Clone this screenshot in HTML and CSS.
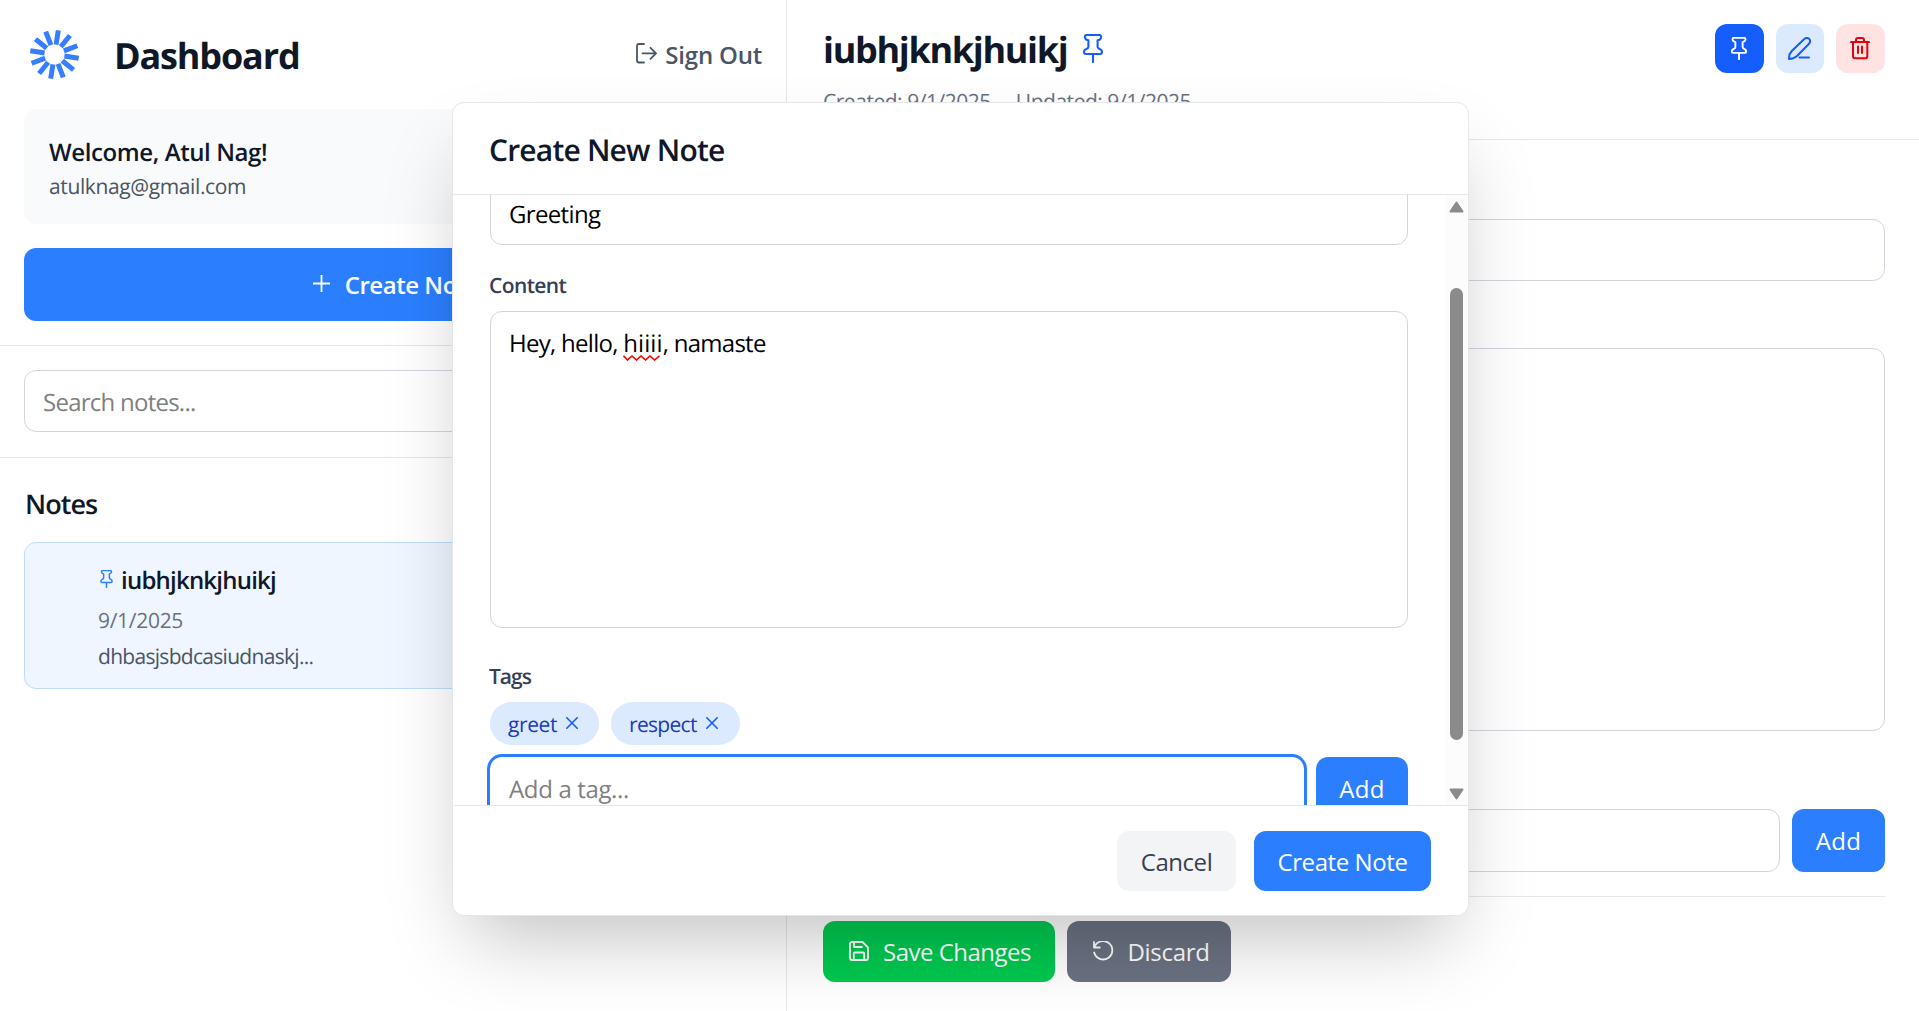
FILE: index.html
```html
<!DOCTYPE html>
<html lang="en">
<head>
<meta charset="utf-8">
<title>Dashboard</title>
<link rel="stylesheet" href="styles.css">
</head>
<body>
<svg class="defs" aria-hidden="true">
  <symbol id="pin" viewBox="0 0 20 29"><path d="M4 1H16Q18.5 1 18 3.5Q17.4 6 14.6 6.4V13Q14.6 14.2 17 15.2Q19 16.3 19 18Q19 20 17.2 20H2.8Q1 20 1 18Q1 16.3 3 15.2Q5.4 14.2 5.4 13V6.4Q2.6 6 2 3.5Q1.5 1 4 1ZM10 20V28"/></symbol>
  <symbol id="cross" viewBox="0 0 12 12"><path d="M.8.8L11.2 11.2M11.2.8L.8 11.2"/></symbol>
</svg>

<div class="app">
  <aside class="sidebar">
    <header class="side-head">
      <div class="brand-row">
        <svg class="logo" viewBox="-30.5 -30.5 61 61">
          <g id="r"><path d="M0-10V-24.5M0 10V24.5"/></g>
          <use href="#r" transform="rotate(30)"/><use href="#r" transform="rotate(60)"/><use href="#r" transform="rotate(90)"/><use href="#r" transform="rotate(120)"/><use href="#r" transform="rotate(150)"/>
        </svg>
        <h1 class="brand">Dashboard</h1>
        <button class="signout">
          <svg class="ico" width="21" height="21" viewBox="0 0 21 21"><path d="M8 1H3Q1 1 1 3V17.5Q1 19.5 3 19.5H8M6.5 10.3H20M14.5 4.8L20 10.3L14.5 15.8"/></svg>
          <span>Sign Out</span>
        </button>
      </div>
      <div class="welcome">
        <p class="hello">Welcome, Atul Nag!</p>
        <p class="email">atulknag@gmail.com</p>
      </div>
      <button class="btn create">
        <svg class="ico" width="17" height="17" viewBox="0 0 17 17"><path d="M8.5 .5V16.5M.5 8.5H16.5"/></svg>
        <span>Create Note</span>
      </button>
    </header>
    <div class="search"><div class="field ph">Search notes...</div></div>
    <section class="notes">
      <h2>Notes</h2>
      <article class="card">
        <h3><svg class="ico pin-s" width="13" height="18"><use href="#pin"/></svg><span>iubhjknkjhuikj</span></h3>
        <p class="date">9/1/2025</p>
        <p class="snippet">dhbasjsbdcasiudnaskj...</p>
      </article>
    </section>
  </aside>

  <main class="detail">
    <header class="detail-head">
      <div>
        <div class="title-row"><h2 class="note-title">iubhjknkjhuikj</h2><svg class="ico pin-l" width="20" height="29"><use href="#pin"/></svg></div>
        <div class="meta"><span>Created: 9/1/2025</span><span>Updated: 9/1/2025</span></div>
      </div>
      <div class="tools">
        <button class="tool tool-pin"><svg class="ico" width="16" height="23"><use href="#pin"/></svg></button>
        <button class="tool tool-edit"><svg class="ico" width="23" height="23" viewBox="0 0 23 23"><path d="M1 22Q.8 17 3.8 14L16 2.2Q18.8-.2 21.2 1.8Q23.2 4.4 20.8 7L9 19Q6 21.8 1 22ZM11.5 20.5H21"/></svg></button>
        <button class="tool tool-del"><svg class="ico" width="20" height="23" viewBox="0 0 20 23"><path d="M1 5H19M6 5V3Q6 1 8 1H12Q14 1 14 3V5M3 5V19.3Q3 21.3 5 21.3H15.3Q17.3 21.3 17.3 19.3V5M8 9.6V16M12 9.6V16"/></svg></button>
      </div>
    </header>
    <div class="editor">
      <div class="field"></div>
      <div class="field area"></div>
      <div class="tag-row"><div class="field grow"></div><button class="btn add">Add</button></div>
      <div class="actions">
        <button class="btn save">
          <svg class="ico" width="20" height="20" viewBox="0 0 20 20"><path d="M3 1H13.5L19 6.5V17Q19 19 17 19H3Q1 19 1 17V3Q1 1 3 1ZM5 1V6H13M4.8 19V12.5Q4.8 11.5 5.8 11.5H14.2Q15.2 11.5 15.2 12.5V19"/></svg>
          <span>Save Changes</span>
        </button>
        <button class="btn discard">
          <svg class="ico" width="21" height="21" viewBox="0 0 21 21"><path d="M1 1V6.5H6.8M1.4 6.3A9.2 9.2 0 1 1 1.2 11.5"/></svg>
          <span>Discard</span>
        </button>
      </div>
    </div>
  </main>
</div>

<div class="modal">
  <header class="modal-head"><h2>Create New Note</h2></header>
  <div class="modal-body">
    <div class="form">
      <div class="field">Greeting</div>
      <label class="lbl lbl-content">Content</label>
      <div class="field note-area"><span class="txt">Hey, hello, <span class="typo">hiiii<svg class="squiggle" width="38" height="6" viewBox="0 0 38 6"><path d="M.5.8L4.5 5L9 1L13.5 5L18 1L22.5 5L27 1L31.5 5L36.5.8"/></svg></span>, namaste</span></div>
      <label class="lbl lbl-tags">Tags</label>
      <div class="chips">
        <span class="chip">greet<svg class="ico" width="12" height="12"><use href="#cross"/></svg></span>
        <span class="chip chip-b">respect<svg class="ico" width="12" height="12"><use href="#cross"/></svg></span>
      </div>
      <div class="tag-row"><div class="field grow focus ph">Add a tag...</div><button class="btn add">Add</button></div>
    </div>
    <div class="bar">
      <svg width="15" height="12" viewBox="0 0 15 12"><path d="M7.5 1.5L13.5 10.5H1.5Z"/></svg>
      <div class="thumb"></div>
      <svg width="15" height="12" viewBox="0 0 15 12"><path d="M7.5 10.5L13.5 1.5H1.5Z"/></svg>
    </div>
  </div>
  <footer class="modal-foot">
    <button class="btn cancel">Cancel</button>
    <button class="btn submit">Create Note</button>
  </footer>
</div>
</body>
</html>
```
FILE: styles.css
```css
* { box-sizing: border-box; margin: 0; padding: 0; }
body {
  width: 1919px;
  height: 1011px;
  overflow: hidden;
  background: #fff;
  color: #101828;
  font: 24px/36px "Open Sans", "Noto Sans", sans-serif;
  letter-spacing: -0.45px;
  text-rendering: geometricPrecision;
}
button { border: 0; background: none; font: inherit; letter-spacing: inherit; color: inherit; }
.defs { display: block; width: 0; height: 0; }
.ico { flex: none; fill: none; stroke: currentColor; stroke-width: 1.8; stroke-linecap: round; stroke-linejoin: round; }

.app { display: flex; height: 1011px; }
.sidebar { flex: none; width: 787px; border-right: 1px solid #e5e7eb; }
.side-head { padding: 24px 24px 24px; border-bottom: 1px solid #e5e7eb; }
.brand-row { display: flex; align-items: center; height: 61px; }
.logo { width: 61px; height: 61px; fill: none; stroke: #377dff; stroke-width: 5; transform: rotate(9deg); }
.brand { margin-left: 29px; padding-top: 2px; font-size: 36px; font-weight: 700; line-height: 48px; letter-spacing: -1.15px; }
.signout { display: flex; align-items: center; gap: 8px; margin-left: auto; padding-top: 1px; color: #4a5565; font-weight: 600; letter-spacing: -.2px; }
.signout .ico { margin-top: -3px; }
.welcome { height: 115px; margin-top: 24px; padding: 26px 24px 24px 25px; border-radius: 12px; background: #f9fafb; }
.hello { font-weight: 600; letter-spacing: -.4px; }
.email { font-size: 21px; line-height: 30px; padding-top: 1px; letter-spacing: -.38px; color: #4a5565; }
.btn { display: flex; align-items: center; justify-content: center; padding-top: 1px; border-radius: 12px; color: #fff; background: #2b7fff; }
.create { width: 100%; height: 73px; margin-top: 24px; gap: 15px; padding-left: 6px; font-weight: 600; }
.create .ico { margin-top: -3px; }
.search { padding: 24px 24px 25px; border-bottom: 1px solid #e5e7eb; }
.field { height: 62px; padding: 13px 18px 0; border: 1px solid #d1d5dc; border-radius: 12px; color: #000; background: #fff; }
.ph { padding-top: 14px; color: #808080; }
.search .ph { letter-spacing: -.75px; }
.notes { padding: 25px 24px; }
.notes h2 { padding-left: 1px; font-size: 27px; font-weight: 600; line-height: 42px; letter-spacing: -.95px; }
.card { height: 147px; margin-top: 17px; padding: 20px 24px 17px 73px; border: 1px solid #bedbff; border-radius: 12px; background: #eff6ff; }
.card h3 { display: flex; align-items: center; gap: 8px; padding-left: 2px; font-size: 24px; font-weight: 600; letter-spacing: -.78px; }
.pin-s { margin-top: -4px; color: #2b7fff; stroke-width: 2.4; }
.date { margin-top: 7px; font-size: 21px; line-height: 30px; letter-spacing: -.3px; color: #6a7282; }
.snippet { margin-top: 6px; font-size: 21px; line-height: 30px; letter-spacing: -.7px; color: #4a5565; }

.detail { flex: 1; }
.detail-head { display: flex; justify-content: space-between; height: 140px; padding: 24px 34px 0 36px; border-bottom: 1px solid #e5e7eb; }
.title-row { display: flex; gap: 16px; }
.note-title { padding-top: 1px; font-size: 36px; font-weight: 700; line-height: 49px; letter-spacing: -1.33px; }
.pin-l { margin-top: 10px; color: #155dfc; stroke-width: 2.1; }
.meta { display: flex; gap: 25px; margin-top: 13px; font-size: 21px; line-height: 30px; letter-spacing: -.47px; color: #6a7282; }
.tools { display: flex; gap: 12px; }
.tool { display: flex; align-items: center; justify-content: center; width: 49px; height: 49px; border-radius: 12px; }
.tool .ico { margin-right: 1px; stroke-width: 2; }
.tool-pin { color: #fff; background: #155dfc; }
.tool .ico use { stroke-width: 2.4; }
.tool-edit { width: 48px; color: #155dfc; background: #dbeafe; }
.tool-del { color: #e7000b; background: #ffe2e2; }
.editor { padding: 79px 34px 0 36px; }
.area { height: 383px; margin-top: 67px; }
.tag-row { display: flex; gap: 12px; }
.editor .tag-row { margin-top: 78px; }
.grow { flex: 1; height: 63px; }
.add { width: 93px; height: 63px; letter-spacing: .4px; }
.actions { display: flex; gap: 12px; margin-top: 24px; padding-top: 24px; border-top: 1px solid #e5e7eb; }
.actions .btn { height: 61px; gap: 14px; padding-left: 2px; }
.actions .ico { margin-top: -2px; }
.save { width: 232px; background: #00c950; letter-spacing: -.5px; }
.actions .discard { width: 164px; padding-left: 5px; gap: 13px; background: #6a7282; letter-spacing: -.3px; }

.modal {
  position: absolute; left: 452px; top: 102px;
  display: flex; flex-direction: column;
  width: 1017px; height: 814px; overflow: hidden;
  border: 1px solid #e5e7eb; border-radius: 12px; background: #fff;
  box-shadow: 0 37.5px 75px -18px rgba(0, 0, 0, .25);
}
.modal-head { height: 92px; padding: 0 36px; border-bottom: 1px solid #e5e7eb; }
.modal-head h2 { padding-top: 1px; font-size: 30px; font-weight: 600; line-height: 91px; letter-spacing: -.81px; }
.modal-body { display: flex; flex: 1; min-height: 0; overflow: hidden; }
.form { flex: 1; margin-top: -12px; padding: 0 37px; }
.form > .field:first-child { letter-spacing: -.65px; }
.lbl { display: block; margin-left: -1px; font-size: 21px; font-weight: 600; line-height: 30px; color: #364153; }
.lbl-content { padding: 26px 0 10px; letter-spacing: -.6px; }
.note-area { height: 317px; padding-top: 14px; letter-spacing: -.72px; }
.typo { position: relative; letter-spacing: .1px; }
.squiggle { position: absolute; left: 0; bottom: -1px; fill: none; stroke: #f00; stroke-width: 1.6; }
.lbl-tags { padding: 34px 0 10px; letter-spacing: -1px; }
.chips { display: flex; gap: 12px; margin-bottom: 12px; }
.chip { display: flex; align-items: center; gap: 9px; width: 109px; height: 43px; padding: 2px 0 0 18px; border-radius: 22px; font-size: 21px; line-height: 30px; letter-spacing: -.4px; color: #193cb8; background: #dbeafe; }
.chip-b { width: 129px; letter-spacing: -.68px; }
.chip .ico { margin-top: -3px; color: #155dfc; stroke-width: 1.6; }
.focus { border-color: transparent; box-shadow: 0 0 0 3px #2b7fff; letter-spacing: -.35px; }
.form .tag-row { gap: 12px; }
.form .add { width: 92px; }
.bar { display: flex; flex-direction: column; align-items: center; width: 23px; padding: 6px 0 5px; background: #fcfcfc; }
.bar svg { flex: none; fill: #8b8b8b; stroke: #8b8b8b; stroke-width: 2; stroke-linejoin: round; }
.thumb { width: 13px; height: 452px; margin: 75px 0 48px; border-radius: 7px; background: #8b8b8b; }
.modal-foot { display: flex; justify-content: flex-end; gap: 18px; height: 110px; padding: 25px 37px 0; border-top: 1px solid #e5e7eb; }
.modal-foot .btn { height: 60px; padding-top: 2px; }
.cancel { width: 119px; color: #364153; background: #f3f4f6; }
.submit { width: 177px; letter-spacing: -.41px; }
```
